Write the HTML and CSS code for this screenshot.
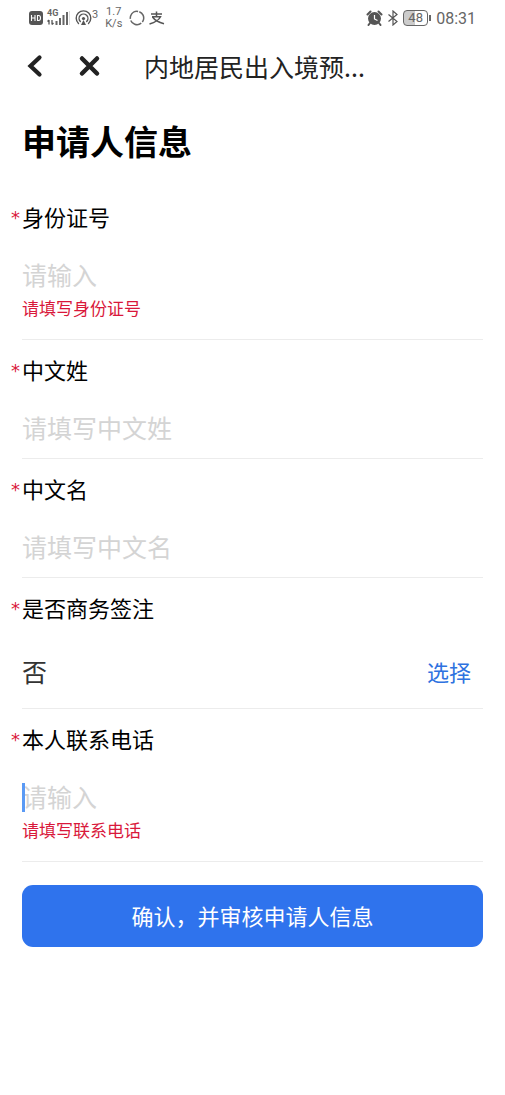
FILE: index.html
```html
<!DOCTYPE html>
<html lang="zh-CN">
<head>
<meta charset="utf-8">
<meta name="viewport" content="width=device-width, initial-scale=1">
<title>内地居民出入境预约</title>
<link rel="stylesheet" href="styles.css">
</head>
<body>
<div class="status">
  <div class="status-group">
    <svg class="icon" width="14" height="14" viewBox="0 0 14 14" role="img" aria-label="HD"><rect width="14" height="14" rx="3" fill="#555"/><path d="M2.500 4v6M6 4v6M2.500 7H6M8.500 4.500v5h1.200q1.800 0 1.800-2.500t-1.800-2.500z" fill="none" stroke="#fff" stroke-width="1.100"/></svg>
    <div class="signal">
      <span class="network">4G</span>
      <svg width="24" height="18" viewBox="0 0 24 18" aria-hidden="true"><path d="M2 11v4.500M0.500 12.500l1.500-1.500M5 11v4.500M6.500 14l-1.500 1.500" fill="none" stroke="#555" stroke-width="1.300"/><path d="M8.500 12h2v4h-2zM12 9h2v7h-2zM15.500 6h2v10h-2zM19 3h2v13h-2z" fill="#666"/><path d="M22 2h1v14h-1z" fill="#ddd"/></svg>
    </div>
    <div class="hotspot">
      <svg width="17" height="16" viewBox="0 0 17 16" aria-hidden="true"><g fill="none" stroke="#555" stroke-width="1.400" stroke-linecap="round"><path d="M3.500 13.500a7.300 7.300 0 1 1 10 0"/><path d="M5.300 11.500a4.400 4.400 0 1 1 6.400 0"/></g><circle cx="8.500" cy="8.500" r="1.600" fill="#555"/><path d="M8.500 10l2.500 5H6z" fill="#555"/></svg>
      <span class="clients">3</span>
    </div>
    <div class="speed"><span>1.7</span><span>K/s</span></div>
    <svg class="icon" width="16" height="16" viewBox="0 0 16 16" aria-hidden="true"><circle cx="8" cy="8" r="6.700" fill="none" stroke="#666" stroke-width="1.500" stroke-dasharray="12.500 1.530" transform="rotate(-70 8 8)"/></svg>
    <svg class="icon" width="16" height="14" viewBox="0 0 16 14" aria-hidden="true"><path d="M2 3h11M7.500 0.500v5M3 5.800h8.500C10 9 6 11.500 0.500 13M3.500 6C6 9.500 10 11.500 15 12.800" fill="none" stroke="#555" stroke-width="1.500"/></svg>
  </div>
  <div class="status-group">
    <svg class="icon" width="17" height="16" viewBox="0 0 17 16" aria-hidden="true"><circle cx="8.500" cy="8.500" r="6.500" fill="#555"/><path d="M1.500 4.500l3-3M15.500 4.500l-3-3M4 13l-1.500 2M13 13l1.500 2" stroke="#555" stroke-width="2" stroke-linecap="round"/><path d="M8.500 5v4l3 1.500" fill="none" stroke="#fff" stroke-width="1.200"/></svg>
    <svg class="icon" width="12" height="16" viewBox="0 0 12 16" aria-hidden="true"><path d="M1.500 4.500l8.500 7-4 3.500V1l4 3.500-8.500 7" fill="none" stroke="#555" stroke-width="1.200"/></svg>
    <div class="battery"><span class="charge">48</span></div>
    <time class="clock">08:31</time>
  </div>
</div>

<header class="nav">
  <button class="nav-button" type="button" aria-label="返回"><svg width="24" height="24" viewBox="0 0 24 24"><path d="M17.500 3.500L8.500 12l9 8.500" fill="none" stroke="#222" stroke-width="4.200" stroke-linecap="round"/></svg></button>
  <button class="nav-button" type="button" aria-label="关闭"><svg width="24" height="24" viewBox="0 0 24 24"><path d="M5 4.500l15 15M20 4.500l-15 15" fill="none" stroke="#222" stroke-width="4.500" stroke-linecap="round"/></svg></button>
  <span class="nav-title">内地居民出入境预...</span>
</header>

<main class="page">
  <h1 class="title">申请人信息</h1>
  <form class="form">
    <div class="row">
      <label class="label" for="id-number"><span class="required">*</span>身份证号</label>
      <div class="field"><input class="input" id="id-number" type="text" placeholder="请输入" aria-describedby="id-error"></div>
      <p class="error" id="id-error">请填写身份证号</p>
    </div>
    <div class="row">
      <label class="label" for="surname"><span class="required">*</span>中文姓</label>
      <div class="field"><input class="input" id="surname" type="text" placeholder="请填写中文姓"></div>
    </div>
    <div class="row">
      <label class="label" for="given-name"><span class="required">*</span>中文名</label>
      <div class="field"><input class="input" id="given-name" type="text" placeholder="请填写中文名"></div>
    </div>
    <div class="row">
      <label class="label" for="choose"><span class="required">*</span>是否商务签注</label>
      <div class="choice"><span class="value">否</span><button class="choose" id="choose" type="button">选择</button></div>
    </div>
    <div class="row">
      <label class="label" for="phone"><span class="required">*</span>本人联系电话</label>
      <div class="field field-active"><input class="input" id="phone" type="tel" placeholder="请输入" aria-describedby="phone-error"></div>
      <p class="error" id="phone-error">请填写联系电话</p>
    </div>
    <button class="submit" type="submit">确认，并审核申请人信息</button>
  </form>
</main>
</body>
</html>
```

FILE: styles.css
```css
* {
  box-sizing: border-box;
}

body {
  margin: 0;
  background: #fff;
  color: #000;
  font-family: "Noto Sans CJK SC", sans-serif;
}

button,
input {
  margin: 0;
  padding: 0;
  border: 0;
  background: none;
  font-family: inherit;
}

.status {
  display: flex;
  justify-content: space-between;
  align-items: center;
  height: 36px;
  padding: 0 29px;
  color: #666;
  font-family: Roboto, sans-serif;
}

.status-group {
  display: flex;
  align-items: center;
  gap: 4px;
}

.icon {
  display: block;
  flex: none;
}

.signal {
  position: relative;
  display: flex;
}

.network {
  position: absolute;
  top: 0;
  left: 0;
  font-size: 9px;
  font-weight: 700;
  line-height: 8px;
}

.hotspot {
  display: flex;
}

.clients {
  font-size: 11px;
  line-height: 10px;
}

.speed {
  display: flex;
  flex-direction: column;
  align-items: center;
  margin: 0 3px;
  font-size: 11px;
  line-height: 12px;
}

.battery {
  display: flex;
  align-items: center;
  gap: 1px;
}

.battery::after {
  width: 2px;
  height: 6px;
  background: #666;
  content: "";
}

.charge {
  width: 25px;
  border: 1px solid #666;
  border-radius: 4px;
  background: linear-gradient(90deg, #ccc 48%, #fff 48%);
  font-size: 13px;
  line-height: 14px;
  text-align: center;
}

.clock {
  margin-left: 1px;
  font-size: 16px;
}

.nav {
  display: flex;
  align-items: center;
  height: 60px;
  padding: 0 22px;
}

.nav-button {
  display: flex;
  margin-right: 31px;
}

.nav-title {
  margin-left: 12px;
  color: #222;
  font-size: 25px;
  line-height: 36px;
}

.page {
  padding: 21px 22px 32px;
}

.title {
  margin: 0 0 22px;
  font-size: 34px;
  font-weight: 700;
  line-height: 48px;
}

.row {
  padding: 13px 0 11px;
  border-bottom: 1px solid #ececec;
}

.label {
  display: flex;
  height: 32px;
  margin: 0 0 22px -12px;
  font-size: 22px;
  line-height: 32px;
}

.required {
  width: 12px;
  padding: 2px 0 0 1px;
  color: #d9183b;
  font-family: "DejaVu Sans", sans-serif;
  font-size: 18px;
}

.field {
  position: relative;
  display: flex;
}

.field-active::before {
  position: absolute;
  top: 7px;
  left: 0;
  width: 3px;
  height: 29px;
  background: #5a9af5;
  content: "";
}

.input {
  width: 100%;
  height: 40px;
  outline: 0;
  color: #333;
  font-size: 25px;
}

.input::placeholder {
  color: #d4d4d4;
  opacity: 1;
}

.error {
  margin: 2px 0 8px;
  color: #d9183b;
  font-size: 17px;
  line-height: 24px;
}

.choice {
  display: flex;
  justify-content: space-between;
  align-items: center;
  height: 52px;
  padding-right: 12px;
}

.value {
  color: #333;
  font-size: 25px;
}

.choose {
  color: #2e72e0;
  font-size: 22px;
}

.submit {
  width: 100%;
  height: 62px;
  margin-top: 23px;
  padding-bottom: 3px;
  border-radius: 11px;
  background: #2f73ed;
  color: #fff;
  font-size: 22px;
}
```
